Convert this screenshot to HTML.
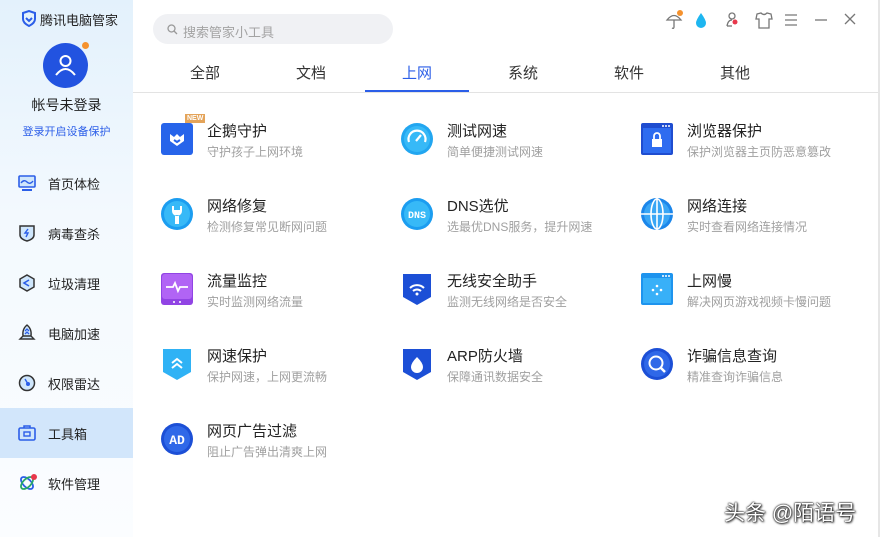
<!DOCTYPE html>
<html><head><meta charset="utf-8"><style>
*{margin:0;padding:0;box-sizing:border-box}
body{width:880px;height:537px;overflow:hidden;background:#fff;font-family:"Liberation Sans","Noto Sans CJK SC",sans-serif;position:relative}
.side{position:absolute;left:0;top:0;width:133px;height:537px;background:linear-gradient(180deg,#e3f1fc 0%,#f3f9fe 40%,#fbfdff 100%)}
.abs{position:absolute}
.nav{position:absolute;left:0;width:133px;height:50px;display:flex;align-items:center;font-size:13px;color:#222}
.nav svg{position:absolute;left:18px}
.nav span{position:absolute;left:48px}
.tab{position:absolute;top:62px;font-size:15px;color:#333;width:60px;text-align:center}
.item{position:absolute}
.item .ic{position:absolute;left:0;top:0;width:32px;height:32px}
.item .t{position:absolute;left:46px;top:-3px;font-size:15px;color:#222;white-space:nowrap}
.item .s{position:absolute;left:46px;top:20px;font-size:12px;color:#a0a0a0;white-space:nowrap}
</style></head><body>
<div class="side">
 <svg class="abs" style="left:21px;top:10px" width="16" height="17" viewBox="0 0 16 17"><path d="M2 3 L8 1 L14 3 L14 9 Q14 13 8 16 Q2 13 2 9 Z" fill="none" stroke="#2b5ee8" stroke-width="2"/><path d="M5 8 L8 11 L11 8" fill="none" stroke="#2b5ee8" stroke-width="2"/></svg>
 <div class="abs" style="left:40px;top:10px;font-size:13px;color:#222">腾讯电脑管家</div>
 <div class="abs" style="left:43px;top:43px;width:45px;height:45px;border-radius:50%;background:#2253e0"></div>
 <svg class="abs" style="left:43px;top:43px" width="45" height="45" viewBox="0 0 45 45"><circle cx="22.5" cy="18" r="5" fill="none" stroke="#fff" stroke-width="2"/><path d="M13 32 Q22.5 20 32 32" fill="none" stroke="#fff" stroke-width="2"/></svg>
 <div class="abs" style="left:82px;top:42px;width:7px;height:7px;border-radius:50%;background:#f5922e"></div>
 <div class="abs" style="left:0;width:133px;top:95px;text-align:center;font-size:14px;color:#222">帐号未登录</div>
 <div class="abs" style="left:0;width:133px;top:123px;text-align:center;font-size:11px;color:#2b5ee8">登录开启设备保护</div>
 <div class="nav" style="top:158px"><svg width="18" height="18" viewBox="0 0 18 18"><rect x="1" y="2" width="16" height="11" rx="1" fill="#cfe6fb" stroke="#2b5ee8" stroke-width="1.6"/><path d="M3 9 Q6 5 9 8 T15 7" fill="none" stroke="#2b5ee8" stroke-width="1.4"/><rect x="4" y="15" width="10" height="2" fill="#2b5ee8"/></svg><span>首页体检</span></div>
 <div class="nav" style="top:208px"><svg width="18" height="18" viewBox="0 0 18 18"><path d="M2 2 H16 V11 Q16 15 9 17 Q2 15 2 11 Z" fill="#cfe6fb" stroke="#333" stroke-width="1.5"/><path d="M10 5 L7 9 H10 L8 13" fill="none" stroke="#2b5ee8" stroke-width="1.4"/></svg><span>病毒查杀</span></div>
 <div class="nav" style="top:258px"><svg width="18" height="18" viewBox="0 0 18 18"><path d="M9 1 L16 5 V13 L9 17 L2 13 V5 Z" fill="#cfe6fb" stroke="#333" stroke-width="1.5"/><path d="M11 6 L6 9 L11 12" fill="none" stroke="#2b5ee8" stroke-width="1.6"/></svg><span>垃圾清理</span></div>
 <div class="nav" style="top:308px"><svg width="18" height="18" viewBox="0 0 18 18"><path d="M9 1 Q14 5 13 12 H5 Q4 5 9 1 Z M5 12 L2 15 H16 L13 12" fill="#cfe6fb" stroke="#333" stroke-width="1.4"/><path d="M7 7 L9 5 L11 7 M7 10 L9 8 L11 10" fill="none" stroke="#2b5ee8" stroke-width="1.3"/></svg><span>电脑加速</span></div>
 <div class="nav" style="top:358px"><svg width="18" height="18" viewBox="0 0 18 18"><circle cx="9" cy="9" r="7.5" fill="#cfe6fb" stroke="#333" stroke-width="1.5"/><circle cx="10" cy="10" r="2" fill="#2b5ee8"/><path d="M7 5 L10 10" stroke="#2b5ee8" stroke-width="1.4"/></svg><span>权限雷达</span></div>
 <div class="abs" style="left:0;top:408px;width:133px;height:50px;background:#d2e6fb"></div>
 <div class="nav" style="top:408px"><svg width="18" height="18" viewBox="0 0 18 18"><rect x="1" y="4" width="16" height="12" rx="1.5" fill="#cfe6fb" stroke="#2b5ee8" stroke-width="1.6"/><path d="M6 4 V2 H12 V4" fill="none" stroke="#2b5ee8" stroke-width="1.5"/><rect x="6" y="8" width="6" height="4" fill="none" stroke="#2b5ee8" stroke-width="1.4"/></svg><span>工具箱</span></div>
 <div class="nav" style="top:458px"><svg width="20" height="20" viewBox="0 0 20 20"><ellipse cx="9" cy="10" rx="7.5" ry="4" transform="rotate(45 9 10)" fill="none" stroke="#2b5ee8" stroke-width="1.8"/><ellipse cx="9" cy="10" rx="7.5" ry="4" transform="rotate(-45 9 10)" fill="none" stroke="#2aa866" stroke-width="1.8"/><circle cx="16" cy="4" r="3" fill="#e8374b"/></svg><span>软件管理</span></div>
</div>
<div class="abs" style="left:153px;top:14px;width:240px;height:30px;border-radius:15px;background:#f0f1f4"></div>
<svg class="abs" style="left:167px;top:24px" width="11" height="11" viewBox="0 0 11 11"><circle cx="4.5" cy="4.5" r="3.5" fill="none" stroke="#999" stroke-width="1.3"/><path d="M7 7 L10 10" stroke="#999" stroke-width="1.3"/></svg>
<div class="abs" style="left:183px;top:22px;font-size:13px;color:#a3a3a3">搜索管家小工具</div>
<svg class="abs" style="left:664px;top:10px" width="200" height="22" viewBox="0 0 200 22">
 <path d="M3 10 Q10 1 17 10 Z M10 10 V17 Q10 19 8 18" fill="none" stroke="#777" stroke-width="1.3"/><circle cx="16" cy="3" r="3" fill="#f5922e"/>
 <path d="M37 3 Q32 10 32 13 A5 5 0 0 0 42 13 Q42 10 37 3 Z" fill="#1eb6f0"/>
 <circle cx="68" cy="6" r="3" fill="none" stroke="#777" stroke-width="1.3"/><path d="M63 16 Q64 10 68 10" fill="none" stroke="#777" stroke-width="1.3"/><path d="M63 16 H68" stroke="#777" stroke-width="1.3"/><circle cx="71" cy="12" r="2.5" fill="#e8374b"/>
 <path d="M93 4 L97 3 Q100 6 103 3 L107 4 L108 9 L105 9 V18 H95 V9 L92 9 Z" fill="none" stroke="#777" stroke-width="1.3"/>
 <path d="M121 5 H133 M121 10 H133 M121 15 H133" stroke="#777" stroke-width="1.3"/>
 <path d="M151 10 H163" stroke="#777" stroke-width="1.3"/>
 <path d="M181 4 L191 14 M191 4 L181 14" stroke="#777" stroke-width="1.3"/>
</svg>
<div class="tab" style="left:175px">全部</div>
<div class="tab" style="left:281px">文档</div>
<div class="tab" style="left:387px;color:#2b5ee8">上网</div>
<div class="tab" style="left:493px">系统</div>
<div class="tab" style="left:599px">软件</div>
<div class="tab" style="left:705px">其他</div>
<div class="abs" style="left:133px;top:92px;width:747px;height:1px;background:#e3e3e3"></div>
<div class="abs" style="left:365px;top:90px;width:104px;height:2px;background:#2b5ee8"></div>
<div class="abs" style="left:878px;top:0;width:2px;height:537px;background:#e6e6e6"></div>

<div class="item" style="left:161px;top:123px"><svg class="ic" viewBox="0 0 32 32"><rect width="32" height="32" rx="3" fill="#2764ea"/><path d="M9 11 L13 14 L16 11 L19 14 L23 11 V18 L16 23 L9 18 Z" fill="#fff"/><path d="M13 17 L16 19 L19 17" fill="none" stroke="#2764ea" stroke-width="2"/></svg><div class="abs" style="left:24px;top:-9px;background:#e4a45a;color:#fff;font-size:7px;font-weight:bold;padding:0 2px;line-height:9px">NEW</div><div class="t">企鹅守护</div><div class="s">守护孩子上网环境</div></div>
<div class="item" style="left:401px;top:123px"><svg class="ic" viewBox="0 0 32 32"><circle cx="16" cy="16" r="16" fill="#22a6f0"/><circle cx="16" cy="16" r="13" fill="#37b9f7"/><path d="M8 19 A8.5 8.5 0 1 1 24 19" fill="none" stroke="#fff" stroke-width="2.2"/><path d="M15 18 L20 12" stroke="#fff" stroke-width="2.2"/></svg><div class="t">测试网速</div><div class="s">简单便捷测试网速</div></div>
<div class="item" style="left:641px;top:123px"><svg class="ic" viewBox="0 0 32 32"><rect width="32" height="32" rx="2" fill="#1f4dd0"/><rect x="2" y="5" width="28" height="25" fill="#2e6cf0"/><circle cx="22" cy="3" r="1" fill="#fff"/><circle cx="25" cy="3" r="1" fill="#fff"/><circle cx="28" cy="3" r="1" fill="#fff"/><rect x="11" y="16" width="10" height="8" fill="#fff"/><path d="M13 16 V13 A3 3 0 0 1 19 13 V16" fill="none" stroke="#fff" stroke-width="1.8"/></svg><div class="t">浏览器保护</div><div class="s">保护浏览器主页防恶意篡改</div></div>

<div class="item" style="left:161px;top:198px"><svg class="ic" viewBox="0 0 32 32"><circle cx="16" cy="16" r="16" fill="#1b9df0"/><circle cx="16" cy="16" r="13" fill="#37b9f7"/><path d="M11 8 V13 A5 5 0 0 0 21 13 V8 L19 8 V12 H13 V8 Z M14 17 H18 V26 H14 Z" fill="#fff"/></svg><div class="t">网络修复</div><div class="s">检测修复常见断网问题</div></div>
<div class="item" style="left:401px;top:198px"><svg class="ic" viewBox="0 0 32 32"><circle cx="16" cy="16" r="16" fill="#1b9df0"/><circle cx="16" cy="16" r="13" fill="#37b9f7"/><text x="16" y="20" text-anchor="middle" font-size="10" font-weight="bold" fill="#fff" font-family="Liberation Mono">DNS</text></svg><div class="t">DNS选优</div><div class="s">选最优DNS服务，提升网速</div></div>
<div class="item" style="left:641px;top:198px"><svg class="ic" viewBox="0 0 32 32"><circle cx="16" cy="16" r="16" fill="#1b86ea"/><circle cx="16" cy="16" r="13" fill="#39a6f5"/><path d="M16 0 V32 M0 16 H32" stroke="#fff" stroke-width="1.6"/><ellipse cx="16" cy="16" rx="6" ry="15" fill="none" stroke="#fff" stroke-width="1.6"/></svg><div class="t">网络连接</div><div class="s">实时查看网络连接情况</div></div>

<div class="item" style="left:161px;top:273px"><svg class="ic" viewBox="0 0 32 32"><rect width="32" height="32" rx="3" fill="#9144e4"/><rect x="1" y="1" width="30" height="25" rx="3" fill="#b164f5"/><path d="M5 14 H12 L14 10 L17 18 L19 14 H27" fill="none" stroke="#fff" stroke-width="1.8"/><circle cx="13" cy="29" r="1" fill="#fff"/><circle cx="19" cy="29" r="1" fill="#fff"/></svg><div class="t">流量监控</div><div class="s">实时监测网络流量</div></div>
<div class="item" style="left:401px;top:273px"><svg class="ic" viewBox="0 0 32 32"><path d="M2 1 H30 V24 L16 32 L2 24 Z" fill="#1c4fd6"/><path d="M9 15 A10 10 0 0 1 23 15 M12 18 A6 6 0 0 1 20 18" fill="none" stroke="#fff" stroke-width="2"/><circle cx="16" cy="21" r="1.5" fill="#fff"/></svg><div class="t">无线安全助手</div><div class="s">监测无线网络是否安全</div></div>
<div class="item" style="left:641px;top:273px"><svg class="ic" viewBox="0 0 32 32"><rect width="32" height="32" rx="2" fill="#1e94ee"/><rect x="2" y="5" width="28" height="25" fill="#38b0f8"/><circle cx="22" cy="3" r="1" fill="#fff"/><circle cx="25" cy="3" r="1" fill="#fff"/><circle cx="28" cy="3" r="1" fill="#fff"/><g fill="#fff"><circle cx="16" cy="13" r="1.3"/><circle cx="20" cy="17" r="1.3"/><circle cx="16" cy="21" r="1.3"/><circle cx="12" cy="17" r="1.3"/></g></svg><div class="t">上网慢</div><div class="s">解决网页游戏视频卡慢问题</div></div>

<div class="item" style="left:161px;top:348px"><svg class="ic" viewBox="0 0 32 32"><path d="M2 1 H30 V24 L16 32 L2 24 Z" fill="#2fb2f5"/><path d="M11 15 L16 11 L21 15 M11 20 L16 16 L21 20" fill="none" stroke="#fff" stroke-width="2"/></svg><div class="t">网速保护</div><div class="s">保护网速，上网更流畅</div></div>
<div class="item" style="left:401px;top:348px"><svg class="ic" viewBox="0 0 32 32"><path d="M2 1 H30 V24 L16 32 L2 24 Z" fill="#1c4fd6"/><path d="M16 9 Q22 15 22 19 A6 6 0 0 1 10 19 Q10 15 16 9 Z" fill="#fff"/></svg><div class="t">ARP防火墙</div><div class="s">保障通讯数据安全</div></div>
<div class="item" style="left:641px;top:348px"><svg class="ic" viewBox="0 0 32 32"><circle cx="16" cy="16" r="16" fill="#1c4fd6"/><circle cx="16" cy="16" r="13" fill="#2f68e8"/><circle cx="15" cy="15" r="6.5" fill="none" stroke="#fff" stroke-width="2"/><path d="M20 20 L24 24" stroke="#fff" stroke-width="2.5"/></svg><div class="t">诈骗信息查询</div><div class="s">精准查询诈骗信息</div></div>

<div class="item" style="left:161px;top:423px"><svg class="ic" viewBox="0 0 32 32"><circle cx="16" cy="16" r="16" fill="#1c4fd6"/><circle cx="16" cy="16" r="13" fill="#2f68e8"/><text x="16" y="21" text-anchor="middle" font-size="13" font-weight="bold" fill="#fff" font-family="Liberation Mono">AD</text></svg><div class="t">网页广告过滤</div><div class="s">阻止广告弹出清爽上网</div></div>

<div class="abs" style="left:724px;top:497px;font-size:21px;color:#fff;text-shadow:0 0 2px #000,0 0 1px #000,1px 1px 2px #333">头条 @陌语号</div>
</body></html>
